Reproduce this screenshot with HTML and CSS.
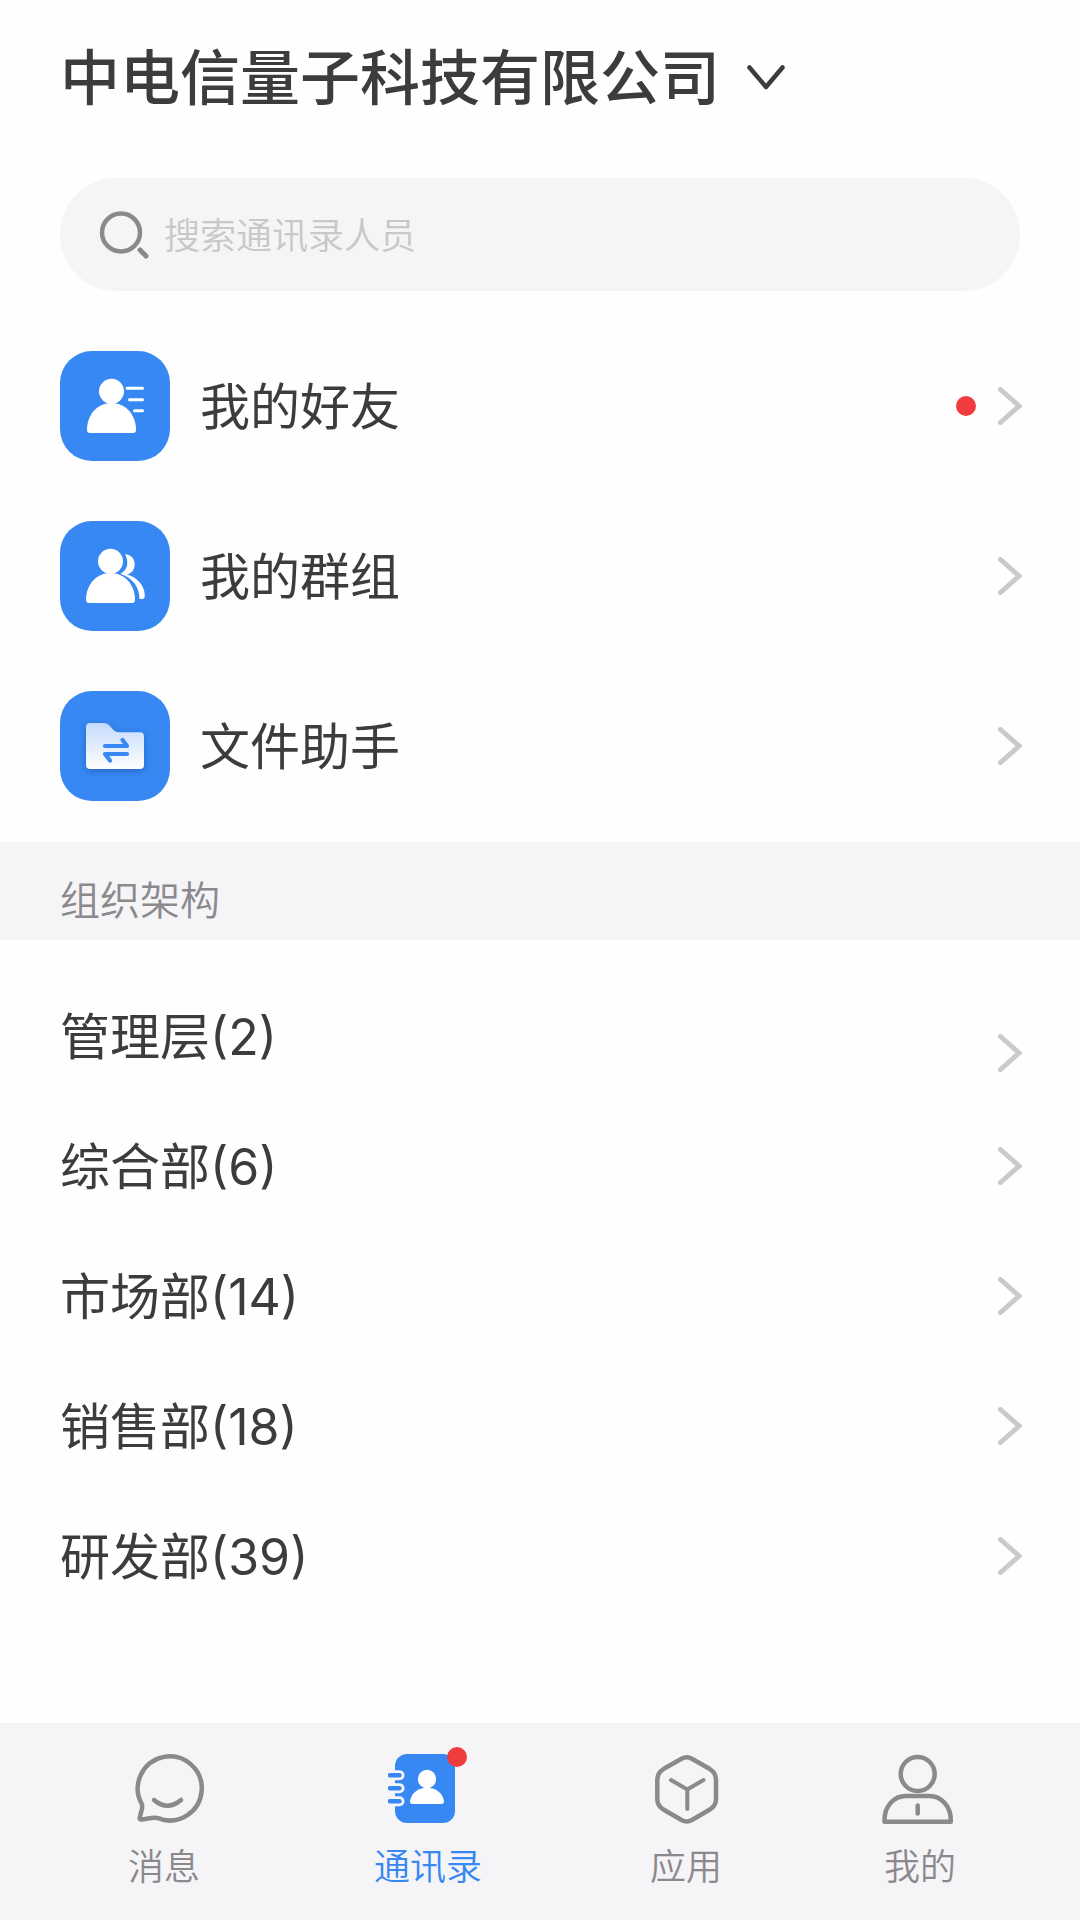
FILE: index.html
```html
<!DOCTYPE html>
<html lang="zh-CN">
<head>
    <meta charset="utf-8">
    <meta name="viewport" content="width=device-width, initial-scale=1">
    <title>通讯录</title>
    <link rel="stylesheet" href="styles.css">
</head>
<body>
    <svg class="defs" aria-hidden="true">
        <symbol id="chevron" viewBox="0 0 24 38">
            <path d="M2.5 2.5L21 19L2.5 35.5" fill="none" stroke="currentColor" stroke-width="5" stroke-linecap="round"/>
        </symbol>
    </svg>

    <header class="header">
        <div class="company">
            <select class="company-select" aria-label="公司">
                <option>中电信量子科技有限公司</option>
            </select>
            <svg class="company-arrow" viewBox="0 0 40 28" aria-hidden="true">
                <path d="M3.5 3.5L20 23L36.5 3.5" fill="none" stroke="currentColor" stroke-width="4.5" stroke-linecap="round" stroke-linejoin="round"/>
            </svg>
        </div>
        <label class="search">
            <svg class="search-icon" viewBox="0 0 52 52" aria-hidden="true">
                <g fill="none" stroke="currentColor" stroke-linecap="round">
                    <circle cx="23" cy="23.5" r="19" stroke-width="4.5"/>
                    <path d="M42 41L48 47" stroke-width="5"/>
                </g>
            </svg>
            <input class="search-input" type="search" placeholder="搜索通讯录人员" aria-label="搜索通讯录人员">
        </label>
    </header>

    <main>
        <ul class="shortcuts">
            <li>
                <a class="row" href="#friends">
                    <svg class="shortcut-icon" viewBox="0 0 110 110" aria-hidden="true">
                        <circle cx="51.5" cy="40.3" r="12.5" fill="#fff"/>
                        <path d="M27 79C27 63 38 52 51.5 52S76 63 76 79Q76 82 73 82H30Q27 82 27 79Z" fill="#fff"/>
                        <path d="M67 37.3H82.5M69.5 48.7H82.5M74.5 59.7H82.5" stroke="#fff" stroke-width="3" stroke-linecap="round"/>
                    </svg>
                    <span class="row-label">我的好友</span>
                    <span class="dot"></span>
                    <svg class="chevron" aria-hidden="true"><use href="#chevron"/></svg>
                </a>
            </li>
            <li>
                <a class="row" href="#groups">
                    <svg class="shortcut-icon" viewBox="0 0 110 110" aria-hidden="true">
                        <g fill="#fff">
                            <circle cx="50.5" cy="40.3" r="12.5"/>
                            <path d="M26 79C26 63 37 52 50.5 52S75 63 75 79Q75 82 72 82H29Q26 82 26 79Z"/>
                            <path d="M65 33.3C71 33.5 74.7 38 74.7 43.5C74.7 49.5 70.5 53 66 54L60.5 52.5C64.5 50.5 67.3 47 67.3 42C67.3 38.5 66.5 36 65 33.3Z"/>
                            <path d="M60 52.7L66 53.3C77 56 85 64.5 84.8 75Q84.7 78 82 78H79.5C79.5 66 73 57 60 52.7Z"/>
                        </g>
                    </svg>
                    <span class="row-label">我的群组</span>
                    <svg class="chevron" aria-hidden="true"><use href="#chevron"/></svg>
                </a>
            </li>
            <li>
                <a class="row" href="#files">
                    <svg class="shortcut-icon" viewBox="0 0 110 110" aria-hidden="true">
                        <defs>
                            <linearGradient id="folder" x1="0" y1="0" x2="0" y2="1">
                                <stop offset="0" stop-color="#c3dafd"/>
                                <stop offset="1" stop-color="#fff"/>
                            </linearGradient>
                        </defs>
                        <path class="folder" d="M26 36Q26 32 30 32H44Q47 32 49 34L54 39.5Q56 41.3 58.5 41.3H80Q84 41.3 84 45.3V74Q84 78 80 78H30Q26 78 26 74Z" fill="url(#folder)"/>
                        <path d="M45 55H67L62.5 49M67 63H45L50 69.5" fill="none" stroke="#3788f2" stroke-width="4.2" stroke-linecap="round" stroke-linejoin="round"/>
                    </svg>
                    <span class="row-label">文件助手</span>
                    <svg class="chevron" aria-hidden="true"><use href="#chevron"/></svg>
                </a>
            </li>
        </ul>

        <h2 class="section-title">组织架构</h2>

        <ul class="departments">
            <li><a class="row row-first" href="#d1"><span class="row-label">管理层(2)</span><svg class="chevron" aria-hidden="true"><use href="#chevron"/></svg></a></li>
            <li><a class="row" href="#d2"><span class="row-label">综合部(6)</span><svg class="chevron" aria-hidden="true"><use href="#chevron"/></svg></a></li>
            <li><a class="row" href="#d3"><span class="row-label">市场部(14)</span><svg class="chevron" aria-hidden="true"><use href="#chevron"/></svg></a></li>
            <li><a class="row" href="#d4"><span class="row-label">销售部(18)</span><svg class="chevron" aria-hidden="true"><use href="#chevron"/></svg></a></li>
            <li><a class="row" href="#d5"><span class="row-label">研发部(39)</span><svg class="chevron" aria-hidden="true"><use href="#chevron"/></svg></a></li>
        </ul>
    </main>

    <nav class="tabbar">
        <a class="tab" href="#messages">
            <svg class="tab-icon" viewBox="0 0 80 80" aria-hidden="true">
                <g fill="none" stroke="currentColor" stroke-width="4.5" stroke-linecap="round" stroke-linejoin="round">
                    <path d="M17.8 58A32 32 0 1 1 34 72.2C29 70.5 24 73 17 73.5Q15.5 73.5 15.8 72C16.5 66 19.5 62 17.8 58Z"/>
                    <path d="M30 54Q43.5 65.5 57 54"/>
                </g>
            </svg>
            <span>消息</span>
        </a>
        <a class="tab active" href="#contacts">
            <span class="tab-badge">
                <svg class="tab-icon" viewBox="0 0 80 80" aria-hidden="true">
                    <rect x="7" y="8" width="60" height="69" rx="12" fill="currentColor"/>
                    <path d="M2 29.3H11.5M2 42.3H11.5M2 55.3H11.5" stroke="#f5f4f7" stroke-width="10" stroke-linecap="round"/>
                    <path d="M2 29.3H11.5M2 42.3H11.5M2 55.3H11.5" stroke="currentColor" stroke-width="4.5" stroke-linecap="round"/>
                    <circle cx="39" cy="33" r="9.2" fill="#fff"/>
                    <path d="M22 55C23.5 47 30 41.7 39 41.7S54.5 47 56 55Q56 58 53.5 58H24.5Q22 58 22 55Z" fill="#fff"/>
                </svg>
                <span class="dot"></span>
            </span>
            <span>通讯录</span>
        </a>
        <a class="tab" href="#apps">
            <svg class="tab-icon" viewBox="0 0 80 80" aria-hidden="true">
                <g fill="none" stroke="currentColor" stroke-width="4.5" stroke-linecap="round" stroke-linejoin="round">
                    <path d="M35.5 12.7Q40.7 9.7 45.9 12.7L63.5 22.8Q70 26.8 70 34V53Q70 60 63.5 63.8L45.9 74Q40.7 77 35.5 74L17.8 63.8Q11.3 60 11.3 53V34Q11.3 26.8 17.8 22.8Z"/>
                    <path d="M25 34L41.3 43.5L57.5 34M41.3 43.5V63" stroke-width="4"/>
                </g>
            </svg>
            <span>应用</span>
        </a>
        <a class="tab" href="#me">
            <svg class="tab-icon" viewBox="0 0 80 80" aria-hidden="true">
                <g fill="none" stroke="currentColor" stroke-width="4.5" stroke-linecap="round" stroke-linejoin="round">
                    <circle cx="37.7" cy="28" r="17"/>
                    <path d="M4.5 74C4.5 60 14 50 26 50H49.5C61 50 70.8 60 70.8 74V75.7H4.5Z"/>
                    <path d="M37.7 59.5V67.5"/>
                </g>
            </svg>
            <span>我的</span>
        </a>
    </nav>
</body>
</html>
```

FILE: styles.css
```css
* {
    box-sizing: border-box;
}
body {
    margin: 0;
    min-height: 100vh;
    display: flex;
    flex-direction: column;
    background: #fefefe;
    color: #3c3b3e;
    font-family: Inter, "Noto Sans CJK SC", sans-serif;
}
ul {
    list-style: none;
    margin: 0;
    padding: 0;
}
a {
    color: inherit;
    text-decoration: none;
}
svg {
    display: block;
    flex: none;
}
.defs {
    position: absolute;
    width: 0;
    height: 0;
}

/* header */
.header {
    padding: 34px 60px 0;
}
.company {
    display: flex;
    align-items: center;
    gap: 26px;
    margin-bottom: 56px;
}
.company-select {
    appearance: none;
    padding: 0;
    border: none;
    background: none;
    color: inherit;
    font: inherit;
    font-size: 60px;
    font-weight: 500;
    line-height: 88px;
}
.company-arrow {
    width: 40px;
    height: 28px;
}
.search {
    display: flex;
    align-items: center;
    gap: 14px;
    height: 113px;
    padding: 0 38px;
    border-radius: 57px;
    background: #f5f5f5;
}
.search-icon {
    width: 52px;
    height: 52px;
    color: #8b898c;
}
.search-input {
    flex: 1;
    min-width: 0;
    padding: 2px 0 0;
    border: none;
    outline: none;
    background: none;
    color: inherit;
    font: inherit;
    font-size: 36px;
    font-weight: 350;
    line-height: 52px;
}
.search-input::placeholder {
    color: #c8c8c8;
    opacity: 1;
}

/* rows */
.row {
    display: flex;
    align-items: center;
    padding: 0 58px 0 60px;
}
.row-label {
    flex: 1;
    padding-top: 2px;
    font-size: 50px;
    line-height: 70px;
}
.chevron {
    width: 24px;
    height: 38px;
    color: #ccc9cd;
}
.dot {
    width: 20px;
    height: 20px;
    border-radius: 50%;
    background: #f13c3f;
}
.row .dot {
    margin-right: 22px;
}
.shortcuts {
    display: flex;
    flex-direction: column;
    gap: 60px;
    padding: 60px 0 41px;
}
.shortcut-icon {
    width: 110px;
    height: 110px;
    margin-right: 30px;
    border-radius: 32px;
    background: #3788f2;
}
.folder {
    filter: drop-shadow(0 2px 3px rgba(20, 70, 150, 0.5));
}
.section-title {
    margin: 0;
    padding: 29px 60px 9px;
    background: #f5f4f7;
    color: #8b898c;
    font-size: 40px;
    font-weight: 350;
    line-height: 60px;
}
.departments {
    padding: 31px 0;
}
.departments .row {
    padding-top: 29px;
    padding-bottom: 29px;
}
.departments .row-first {
    align-items: flex-end;
}

/* bottom tabs */
.tabbar {
    display: grid;
    grid-template-columns: 22fr 22fr 21fr 18fr;
    margin-top: auto;
    padding: 23px 52px 33px 32px;
    background: #f5f4f7;
}
.tab {
    display: flex;
    flex-direction: column;
    align-items: center;
    gap: 21px;
    color: #8b898c;
    font-size: 36px;
    font-weight: 350;
    line-height: 40px;
}
.tab.active {
    color: #3788f2;
}
.tab-icon {
    width: 80px;
    height: 80px;
}
.tab-badge {
    position: relative;
}
.tab-badge .dot {
    position: absolute;
    top: 1px;
    right: 1px;
}
```
